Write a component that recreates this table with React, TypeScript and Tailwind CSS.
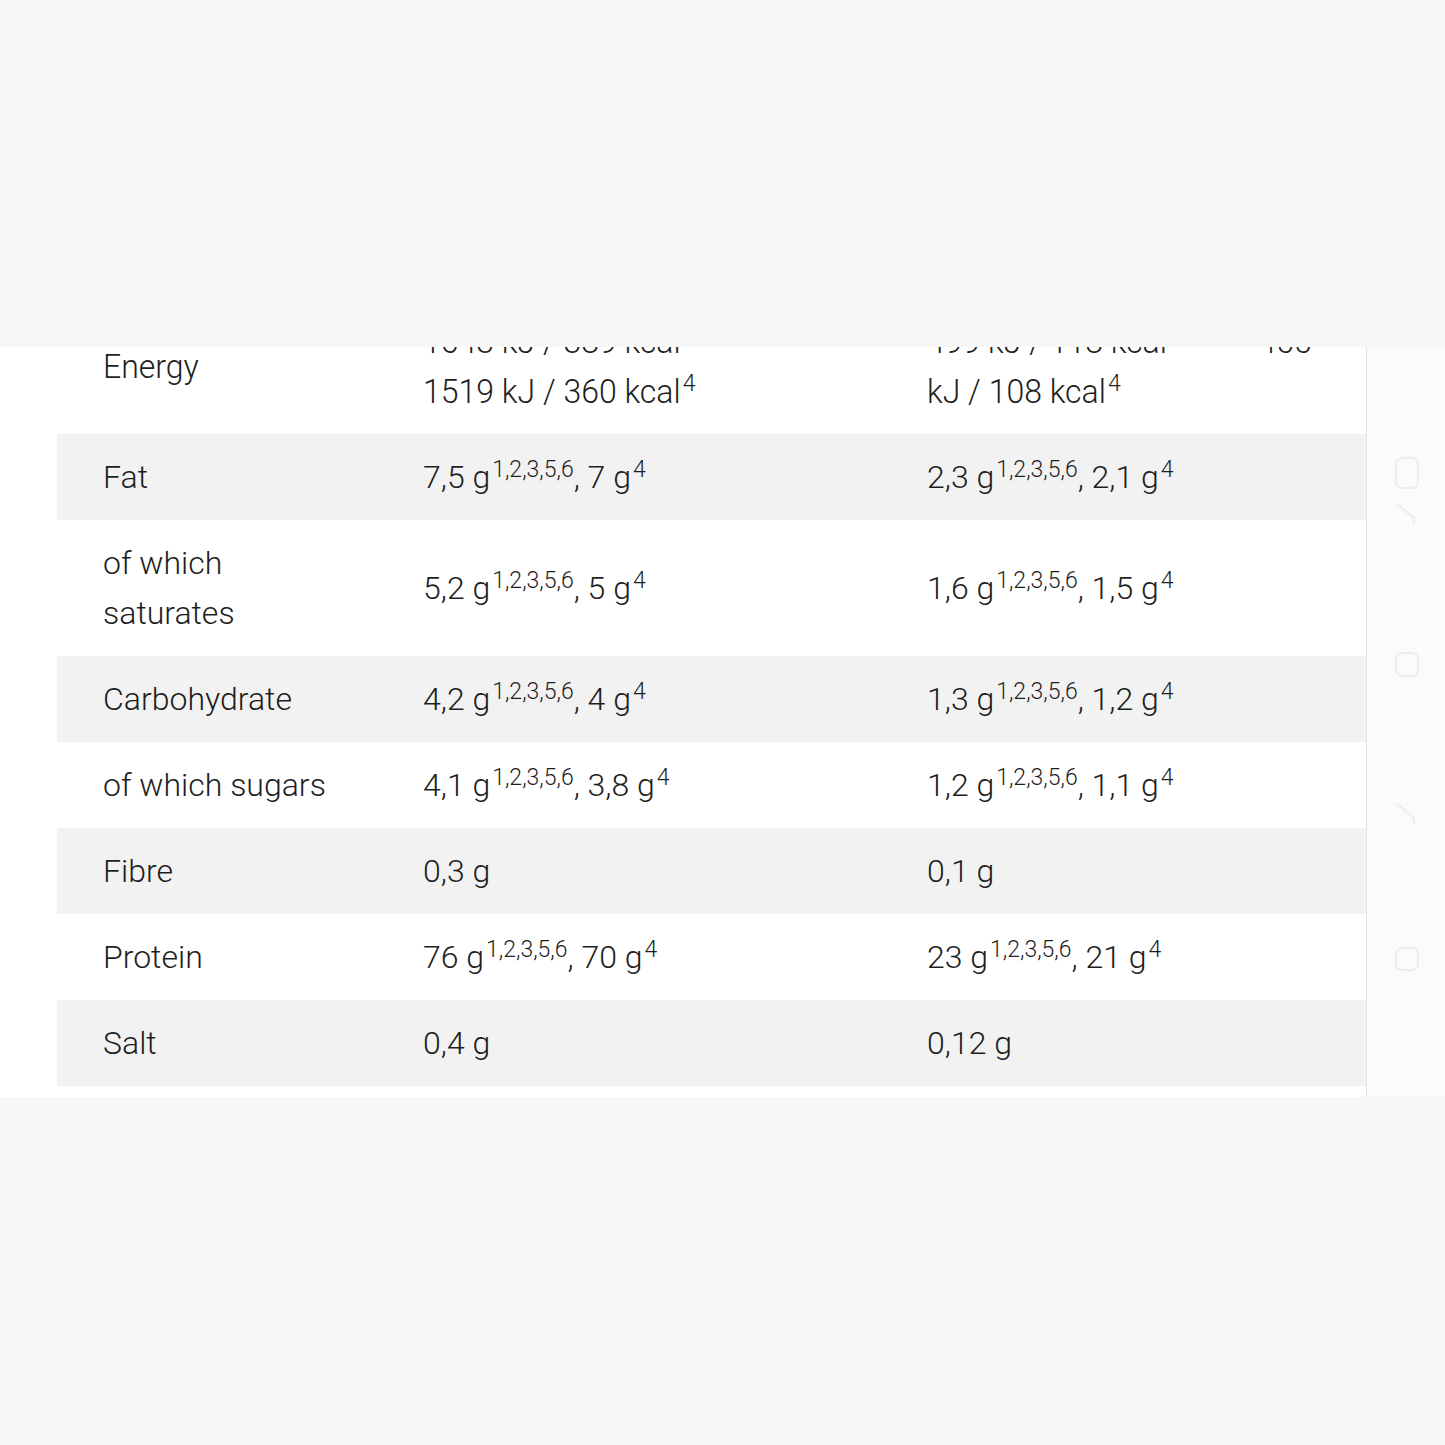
import React from "react";

const SUP = "1,2,3,5,6";

function Sup({ children }: { children: React.ReactNode }) {
  return <sup className="text-[23px] top-[-0.5em] ml-[2px]">{children}</sup>;
}

type Row = { label: React.ReactNode; a: React.ReactNode; b: React.ReactNode; gray: boolean };

const rows: Row[] = [
  {
    label: "Fat",
    a: (<>7,5 g<Sup>{SUP}</Sup>, 7 g<Sup>4</Sup></>),
    b: (<>2,3 g<Sup>{SUP}</Sup>, 2,1 g<Sup>4</Sup></>),
    gray: true,
  },
  {
    label: (<>of which<br />saturates</>),
    a: (<>5,2 g<Sup>{SUP}</Sup>, 5 g<Sup>4</Sup></>),
    b: (<>1,6 g<Sup>{SUP}</Sup>, 1,5 g<Sup>4</Sup></>),
    gray: false,
  },
  {
    label: "Carbohydrate",
    a: (<>4,2 g<Sup>{SUP}</Sup>, 4 g<Sup>4</Sup></>),
    b: (<>1,3 g<Sup>{SUP}</Sup>, 1,2 g<Sup>4</Sup></>),
    gray: true,
  },
  {
    label: "of which sugars",
    a: (<>4,1 g<Sup>{SUP}</Sup>, 3,8 g<Sup>4</Sup></>),
    b: (<>1,2 g<Sup>{SUP}</Sup>, 1,1 g<Sup>4</Sup></>),
    gray: false,
  },
  { label: "Fibre", a: "0,3 g", b: "0,1 g", gray: true },
  {
    label: "Protein",
    a: (<>76 g<Sup>{SUP}</Sup>, 70 g<Sup>4</Sup></>),
    b: (<>23 g<Sup>{SUP}</Sup>, 21 g<Sup>4</Sup></>),
    gray: false,
  },
  { label: "Salt", a: "0,4 g", b: "0,12 g", gray: true },
];

function Ghost({ h }: { h: number }) {
  return (
    <svg width="30" height={h + 8} viewBox={`0 0 30 ${h + 8}`} fill="none" stroke="#ececf1" strokeWidth="2" strokeLinecap="round" strokeLinejoin="round">
      <rect x="4" y="4" width="22" height={h} rx="6" />
    </svg>
  );
}

function Seven() {
  return (
    <svg width="30" height="26" viewBox="0 0 30 26" fill="none" stroke="#ececf1" strokeWidth="2" strokeLinecap="round" strokeLinejoin="round">
      <path d="M5 4 L22 18 L22 23" />
    </svg>
  );
}

export default function App() {
  return (
    <div className="min-h-[1445px] bg-[#f7f7f7] pt-[347px] font-['Roboto','Liberation_Sans',sans-serif] font-light text-[#1e1e1e]">
      <div className="flex h-[750px]">
        <div className="w-[1367px] shrink-0 overflow-hidden border-r border-[#e2e2e4] bg-white pl-[57px]">
          <div className="-mt-[49px] text-[32px] leading-[50px]">
            {/* Energy row */}
            <div className="grid grid-cols-[320px_504px_1fr] py-[18px] bg-white">
              <div className="flex items-center pl-[46px]">
                <span className="inline-block origin-left scale-y-[1.05]">Energy</span>
              </div>
              <div className="pl-[46px]">
                <div className="whitespace-nowrap origin-left scale-y-[1.05]">1643 kJ / 389 kcal<Sup>{SUP}</Sup></div>
                <div className="whitespace-nowrap origin-left scale-y-[1.05]">1519 kJ / 360 kcal<Sup>4</Sup></div>
              </div>
              <div className="pl-[46px]">
                <div className="whitespace-nowrap origin-left scale-y-[1.05]">499 kJ / 118 kcal<Sup>{SUP}</Sup> 455</div>
                <div className="whitespace-nowrap origin-left scale-y-[1.05]">kJ / 108 kcal<Sup>4</Sup></div>
              </div>
            </div>
            {rows.map((r, i) => (
              <div
                key={i}
                className={`grid grid-cols-[320px_504px_1fr] py-[18px] ${r.gray ? "bg-[#f2f2f2]" : "bg-white"}`}
              >
                <div className="flex items-center pl-[46px]">
                  <span>{r.label}</span>
                </div>
                <div className="flex items-center pl-[46px] whitespace-nowrap">
                  <span>{r.a}</span>
                </div>
                <div className="flex items-center pl-[46px] whitespace-nowrap">
                  <span>{r.b}</span>
                </div>
              </div>
            ))}
          </div>
        </div>
        <div className="relative flex-1 bg-[#fbfafc]">
          <div className="absolute left-[25px] top-[107px]"><Ghost h={30} /></div>
          <div className="absolute left-[25px] top-[153px]"><Seven /></div>
          <div className="absolute left-[25px] top-[302px]"><Ghost h={23} /></div>
          <div className="absolute left-[25px] top-[453px]"><Seven /></div>
          <div className="absolute left-[25px] top-[597px]"><Ghost h={22} /></div>
        </div>
      </div>
    </div>
  );
}
